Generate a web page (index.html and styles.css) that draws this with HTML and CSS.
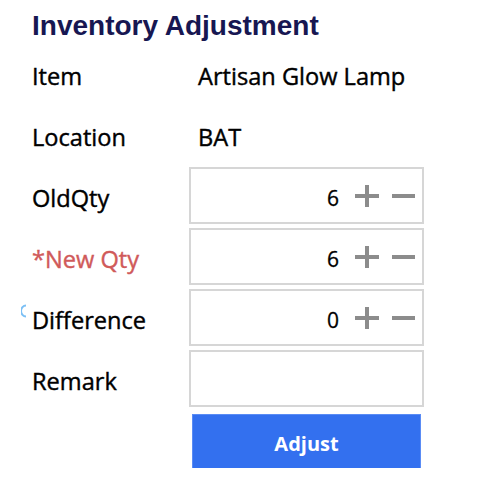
FILE: index.html
```html
<!DOCTYPE html>
<html>
<head>
<meta charset="utf-8">
<link rel="stylesheet" href="styles.css">
</head>
<body>
<div class="page">
  <h1 class="title">Inventory Adjustment</h1>
  <div class="form">
    <div class="label">Item</div>
    <div class="value">Artisan Glow Lamp</div>

    <div class="label">Location</div>
    <div class="value">BAT</div>

    <div class="label">OldQty</div>
    <div class="box stepper">
      <span class="num">6</span>
      <svg class="icon" width="24" height="22" viewBox="0 0 24 22"><rect x="10" y="0" width="4" height="22" fill="#8c8c8c"/><rect x="0" y="9" width="24" height="4" fill="#8c8c8c"/></svg>
      <svg class="icon" width="23" height="22" viewBox="0 0 23 22"><rect x="0" y="9" width="23" height="4" fill="#8c8c8c"/></svg>
    </div>

    <div class="label required">*New Qty</div>
    <div class="box stepper">
      <span class="num">6</span>
      <svg class="icon" width="24" height="22" viewBox="0 0 24 22"><rect x="10" y="0" width="4" height="22" fill="#8c8c8c"/><rect x="0" y="9" width="24" height="4" fill="#8c8c8c"/></svg>
      <svg class="icon" width="23" height="22" viewBox="0 0 23 22"><rect x="0" y="9" width="23" height="4" fill="#8c8c8c"/></svg>
    </div>

    <div class="label diff">
      <svg class="spinner" width="6" height="14" viewBox="0 0 6 14"><path d="M5 1.5 A5 5.5 0 0 0 5 12.5" fill="none" stroke="#7cc0f5" stroke-width="2"/></svg>
      Difference
    </div>
    <div class="box stepper">
      <span class="num">0</span>
      <svg class="icon" width="24" height="22" viewBox="0 0 24 22"><rect x="10" y="0" width="4" height="22" fill="#8c8c8c"/><rect x="0" y="9" width="24" height="4" fill="#8c8c8c"/></svg>
      <svg class="icon" width="23" height="22" viewBox="0 0 23 22"><rect x="0" y="9" width="23" height="4" fill="#8c8c8c"/></svg>
    </div>

    <div class="label">Remark</div>
    <div class="box"></div>

    <div></div>
    <button class="btn">Adjust</button>
  </div>
</div>
</body>
</html>
```
FILE: styles.css
```css
html, body {
  margin: 0;
  padding: 0;
  background: #fff;
}
.page {
  padding: 10px 0 0 32px;
  font-family: "Open Sans", "Noto Sans", sans-serif;
}
.title {
  margin: 0;
  font-family: "Liberation Sans", Arial, sans-serif;
  font-weight: bold;
  font-size: 28px;
  line-height: 32px;
  color: #171752;
}
.form {
  display: grid;
  grid-template-columns: 157px 235px;
  grid-auto-rows: 57px;
  row-gap: 4px;
  margin-top: 3px;
}
.label, .value {
  display: flex;
  align-items: center;
  font-size: 23.6px;
  color: #000;
  padding-top: 4px;
  -webkit-text-stroke: 0.4px currentColor;
}
.value {
  padding-left: 9px;
}
.required {
  color: #d05a5a;
}
.diff {
  position: relative;
}
.spinner {
  position: absolute;
  left: -11px;
  top: 15px;
}
.box {
  border: 2px solid #d6d6d6;
  box-sizing: border-box;
  background: #fff;
}
.stepper {
  display: flex;
  align-items: center;
  justify-content: flex-end;
  padding-right: 7px;
  gap: 13px;
}
.num {
  font-size: 21px;
  margin-right: 3px;
  padding-top: 4px;
  -webkit-text-stroke: 0.3px currentColor;
}
.icon {
  display: block;
}
.btn {
  align-self: start;
  box-sizing: border-box;
  margin: 3px 3px 0 3px;
  height: 59px;
  border: 1px solid #5a8cf5;
  background: #3370ef;
  color: #fff;
  font-family: "Open Sans", "Noto Sans", sans-serif;
  font-weight: 700;
  font-size: 20px;
  padding: 0;
}
```
